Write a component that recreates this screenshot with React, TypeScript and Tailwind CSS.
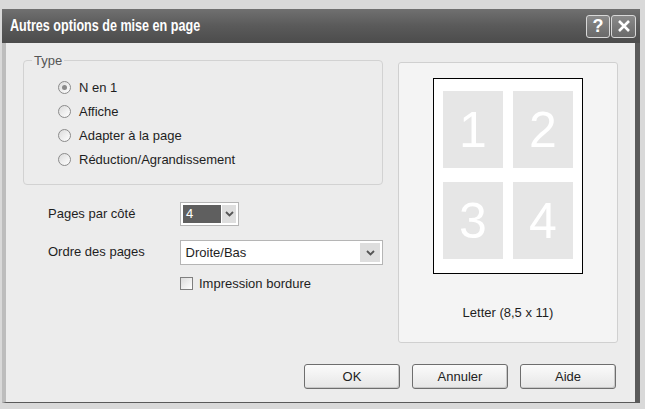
import React from 'react';

const font = { fontFamily: '"Liberation Sans", Arial, sans-serif' };

const Radio = ({ checked, label }: { checked?: boolean; label: string }) => (
  <div className="flex items-center h-[24px]">
    <span className="w-[13px] h-[13px] rounded-full border border-[#8b8b8b] bg-gradient-to-br from-[#dcdcdc] to-[#ffffff] flex items-center justify-center">
      {checked && <span className="w-[5px] h-[5px] rounded-full bg-[#8a8a8a]" />}
    </span>
    <span className="ml-[8px]">{label}</span>
  </div>
);

const Chevron = () => (
  <svg width="9" height="6" viewBox="0 0 9 6">
    <path d="M1 1 L4.5 4.5 L8 1" fill="none" stroke="#555" strokeWidth="1.8" />
  </svg>
);

const Button = ({ label }: { label: string }) => (
  <button className="w-[96px] h-[25px] rounded-[3px] border border-[#6e6e6e] bg-gradient-to-b from-[#fbfbfb] to-[#e6e6e6] shadow-[inset_-1px_-1px_0_#c8c8c8] text-[13px] text-[#222]">
    {label}
  </button>
);

export default function App() {
  return (
    <div className="w-[645px] h-[409px] bg-[#d9d9d9] pt-[9px] pl-[2px] text-[13px] text-[#1e1e1e]" style={font}>
      <div className="w-[638px] h-[394px] flex flex-col">
        {/* Title bar */}
        <div className="h-[34px] bg-gradient-to-b from-[#707070] via-[#5a5a5a] to-[#4c4c4c] flex items-center pl-[8px] pr-[4px]">
          <span className="text-white font-bold text-[17px] origin-left scale-x-[0.74] inline-block whitespace-nowrap">
            Autres options de mise en page
          </span>
          <div className="ml-auto flex gap-[1px]">
            <div className="w-[24px] h-[23px] rounded-[3px] border border-[#d8d8d8] bg-gradient-to-b from-[#8a8a8a] to-[#6a6a6a] flex items-center justify-center text-white text-[18px] font-bold leading-none">
              ?
            </div>
            <div className="w-[25px] h-[23px] rounded-[3px] border border-[#d8d8d8] bg-gradient-to-b from-[#8a8a8a] to-[#6a6a6a] flex items-center justify-center">
              <svg width="14" height="14" viewBox="0 0 14 14">
                <path d="M2 2 L12 12 M12 2 L2 12" stroke="white" strokeWidth="2.6" />
              </svg>
            </div>
          </div>
        </div>

        {/* Body */}
        <div className="flex-1 bg-[#ececec] border-l-[4px] border-l-[#bdbdbd] border-r-[5px] border-r-[#5a5a5a] border-b-[1px] border-b-[#5a5a5a] pl-[17px] pr-[17px] pt-[18px] flex flex-col">
          <div className="flex gap-[15px]">
            {/* Left column */}
            <div className="w-[360px] flex flex-col">
              <fieldset className="h-[134px] border border-[#d2d2d2] rounded-[4px] -mt-[10px]">
                <legend className="ml-[8px] px-[2px] text-[13px] text-[#555]">Type</legend>
                <div className="pl-[34px] pt-[5px]">
                  <Radio checked label="N en 1" />
                  <Radio label="Affiche" />
                  <Radio label="Adapter à la page" />
                  <Radio label="Réduction/Agrandissement" />
                </div>
              </fieldset>

              <div className="flex items-center mt-[17px]">
                <span className="w-[157px] pl-[25px]">Pages par côté</span>
                <div className="w-[59px] h-[24px] border border-[#b5b5b5] bg-white flex items-center p-[2px]">
                  <span className="w-[38px] h-full bg-[#5f5f5f] text-white pl-[3px] flex items-center">4</span>
                  <span className="flex-1 h-full ml-[1px] bg-[#dedede] flex items-center justify-center">
                    <Chevron />
                  </span>
                </div>
              </div>

              <div className="flex items-center mt-[14px]">
                <span className="w-[157px] pl-[25px] self-start pt-[2px]">Ordre des pages</span>
                <div className="w-[204px] h-[25px] border border-[#b5b5b5] bg-white flex items-center p-[2px]">
                  <span className="flex-1 pl-[3px]">Droite/Bas</span>
                  <span className="w-[20px] h-full bg-[#dedede] flex items-center justify-center">
                    <Chevron />
                  </span>
                </div>
              </div>

              <div className="flex items-center mt-[9px] pl-[157px]">
                <span className="w-[13px] h-[13px] border border-[#7f7f7f] bg-gradient-to-br from-[#dcdcdc] to-white" />
                <span className="ml-[6px]">Impression bordure</span>
              </div>
            </div>

            {/* Preview panel */}
            <div className="w-[220px] h-[281px] mt-[1px] bg-[#f4f4f4] border border-[#d0d0d0] rounded-[3px] flex flex-col items-center pt-[15px]">
              <div className="w-[150px] h-[196px] border border-black bg-white pt-[12px] pl-[9px]">
                <div className="grid grid-cols-[60px_60px] grid-rows-[77px_77px] gap-x-[10px] gap-y-[14px]">
                  {['1', '2', '3', '4'].map((n) => (
                    <div key={n} className="bg-[#e6e6e6] flex items-center justify-center text-white text-[50px] leading-none">
                      {n}
                    </div>
                  ))}
                </div>
              </div>
              <div className="mt-[29px] text-[13px]">Letter (8,5 x 11)</div>
            </div>
          </div>

          <div className="flex justify-end gap-[12px] mt-[21px] pr-[2px]">
            <Button label="OK" />
            <Button label="Annuler" />
            <Button label="Aide" />
          </div>
        </div>
      </div>
    </div>
  );
}
